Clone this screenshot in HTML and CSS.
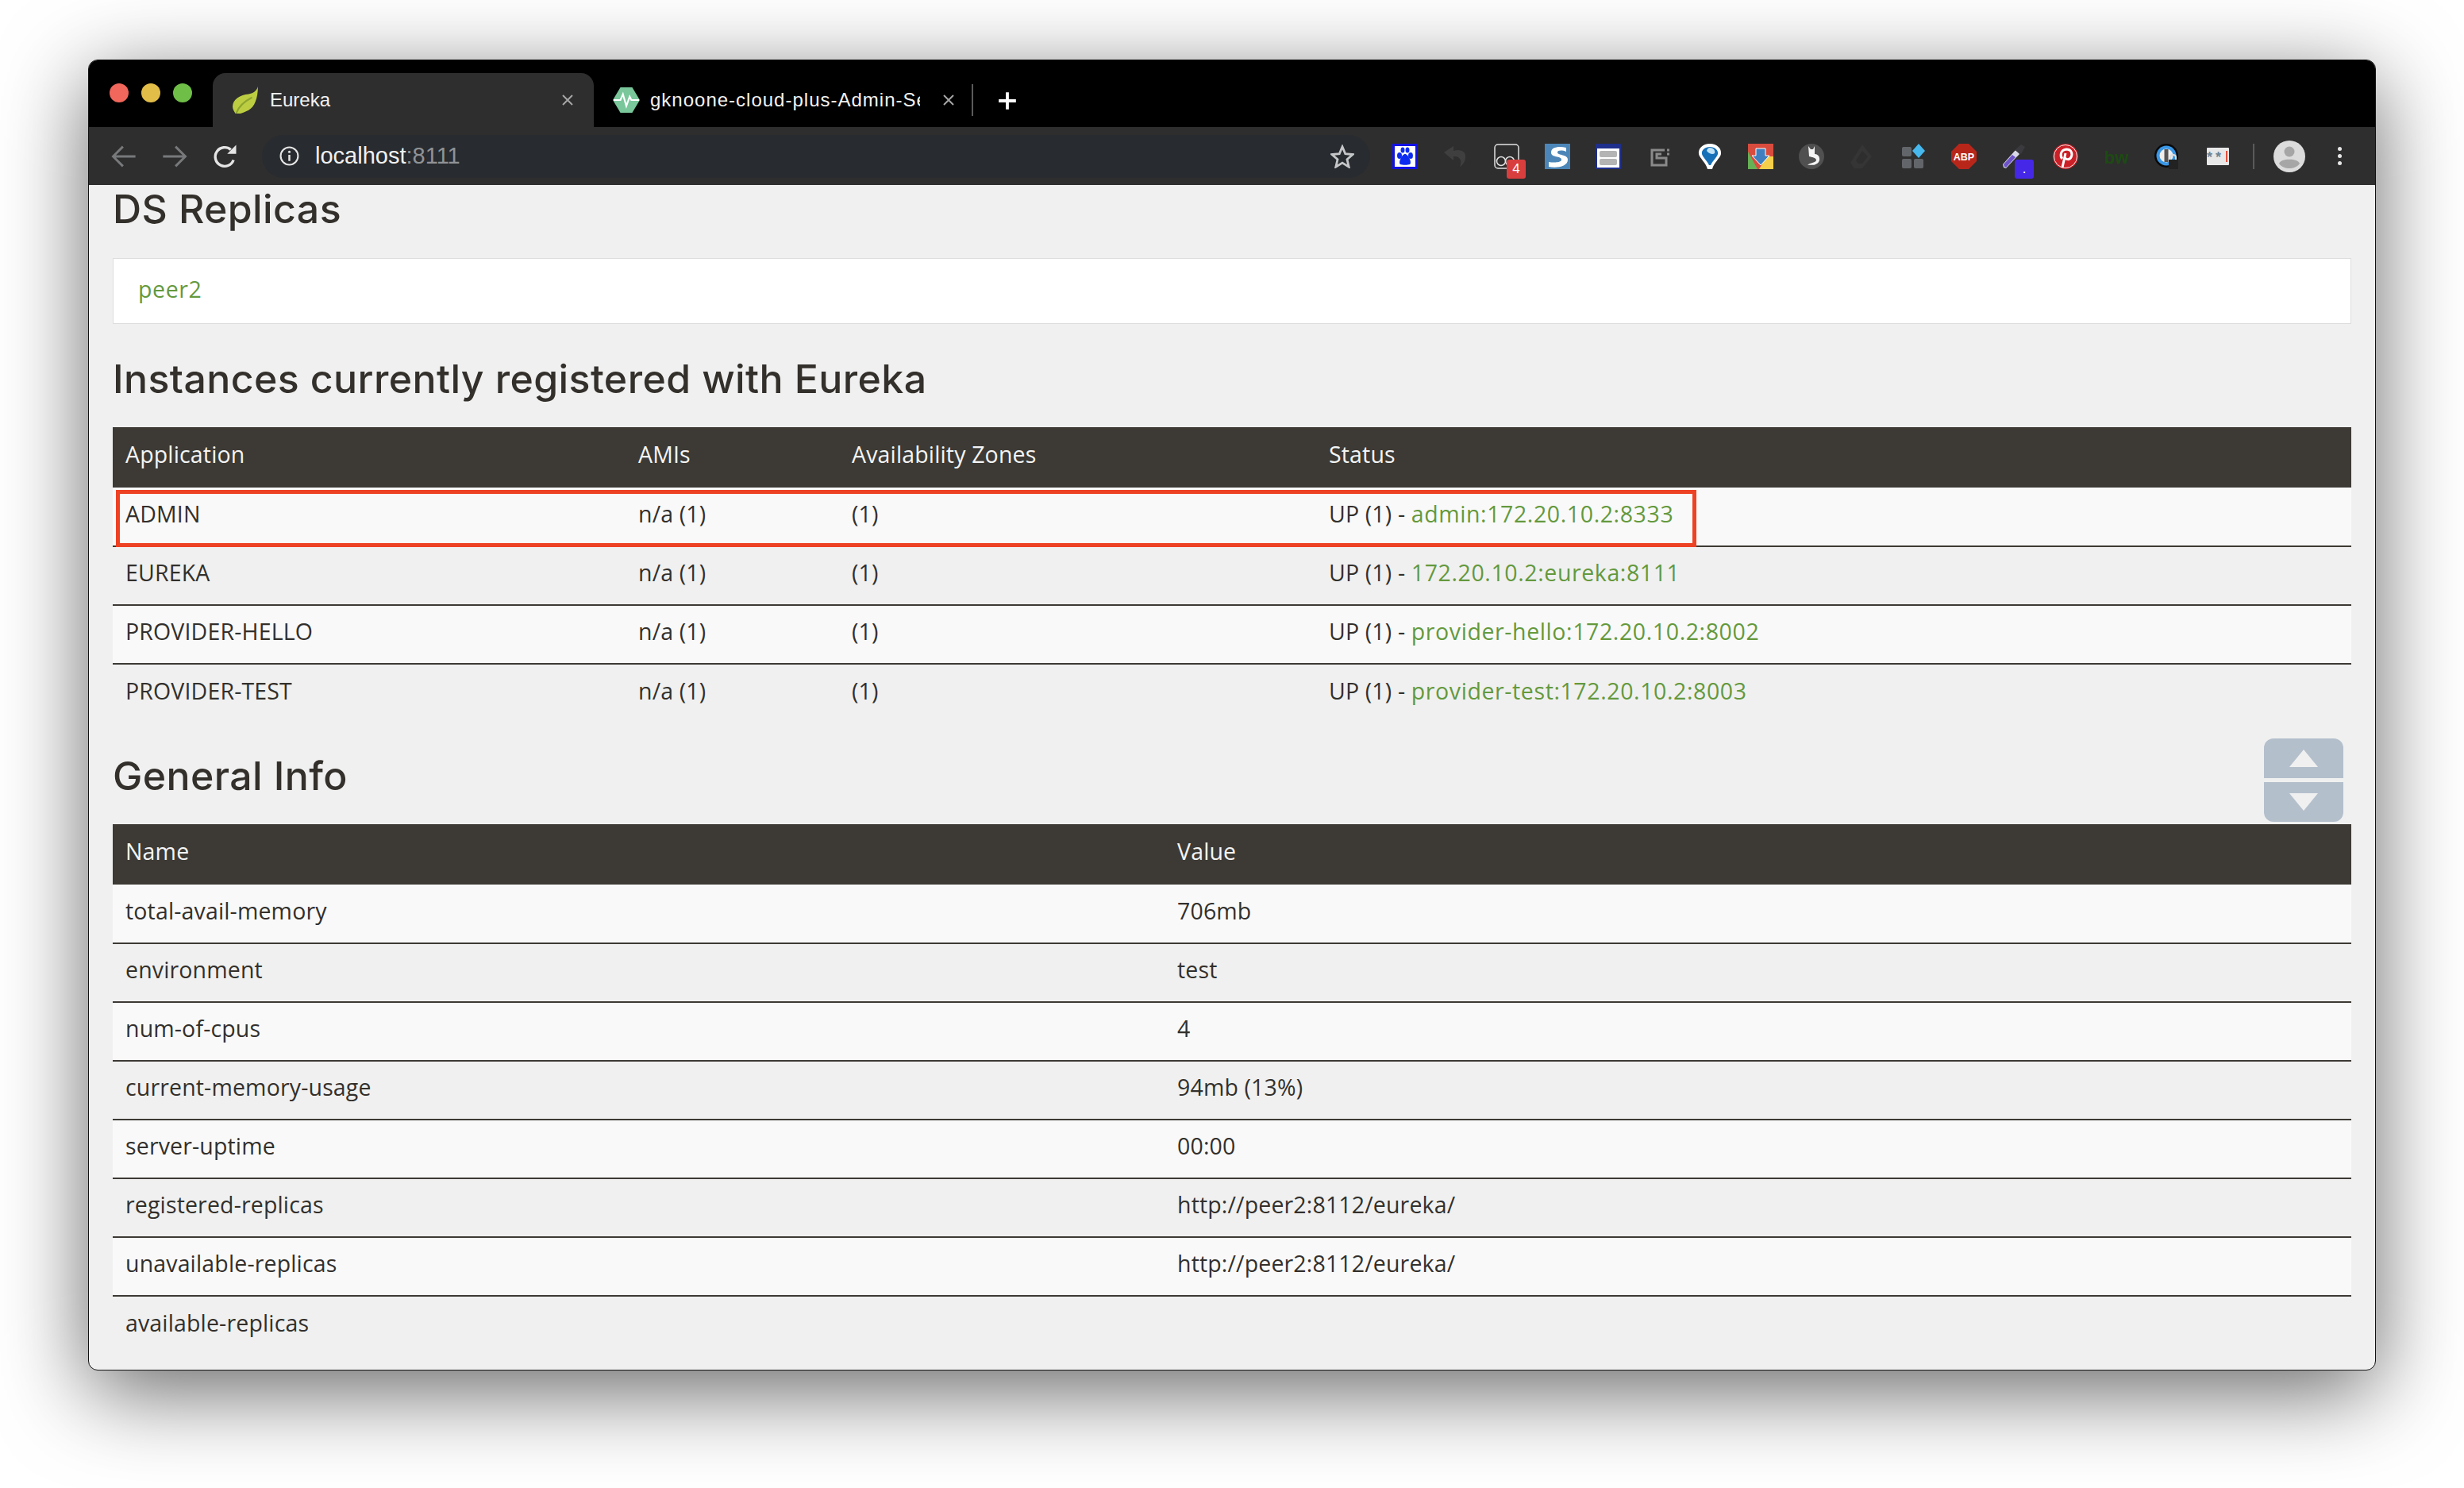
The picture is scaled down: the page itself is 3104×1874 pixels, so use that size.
FILE: index.html
```html
<!DOCTYPE html>
<html lang="en">

<head>
    <meta charset="utf-8">
    <title>Eureka</title>
    <link rel="stylesheet" href="styles.css">
</head>

<body>
    <div class="vindue">
        <div class="faner">
            <div class="lys">
                <span class="lys_rod"></span>
                <span class="lys_gul"></span>
                <span class="lys_gron"></span>
            </div>
            <div class="fane aktiv">
                <svg class="favicon" viewBox="0 0 32 32">
                    <path d="M31 0C29 6 25 8 20 9C10 10 1 15 1 24C1 27 3 30 5 33C8 33 14 31 20 28C27 24 31 14 31 0Z" fill="#bccd42" />
                    <path d="M5 32C8 24 14 18 24 13" stroke="#8da52f" stroke-width="2" fill="none" />
                </svg>
                <span class="fane_navn">Eureka</span>
                <svg class="luk" viewBox="0 0 16 16">
                    <path d="M2 2L14 14M14 2L2 14" stroke="#a5a5a5" stroke-width="2" />
                </svg>
            </div>
            <div class="fane">
                <svg class="favicon" viewBox="0 0 32 32">
                    <path d="M9 1H23L32 16L23 31H9L0 16Z" fill="#79c79b" />
                    <path d="M1 16H9L12 9L16 23L20 12L22 16H31" stroke="#fff" stroke-width="2" fill="none" />
                </svg>
                <span class="fane_navn">gknoone-cloud-plus-Admin-Se</span>
                <svg class="luk" viewBox="0 0 16 16">
                    <path d="M2 2L14 14M14 2L2 14" stroke="#a5a5a5" stroke-width="2" />
                </svg>
            </div>
            <span class="fane_streg"></span>
            <svg class="ny_fane" viewBox="0 0 24 24">
                <path d="M12 2V22M2 12H22" stroke="#fff" stroke-width="3.5" />
            </svg>
        </div>

        <div class="vaerktoj">
            <svg class="nav_ikon" viewBox="0 0 32 32">
                <path d="M29 16H4M15 5L4 16L15 27" stroke="#77797b" stroke-width="2.6" fill="none" />
            </svg>
            <svg class="nav_ikon" viewBox="0 0 32 32">
                <path d="M3 16H28M17 5L28 16L17 27" stroke="#77797b" stroke-width="2.6" fill="none" />
            </svg>
            <svg class="nav_ikon" viewBox="0 0 32 32">
                <path d="M25 20A10.500 10.500 0 1 1 22 8.500" stroke="#e4e4e4" stroke-width="3" fill="none" />
                <path d="M18 13H28V3Z" fill="#e4e4e4" />
            </svg>
            <div class="adresse">
                <svg class="info" viewBox="0 0 24 24">
                    <circle cx="12" cy="12" r="10.500" stroke="#e4e4e4" stroke-width="2" fill="none" />
                    <path d="M12 10.500V18" stroke="#e4e4e4" stroke-width="2.400" />
                    <circle cx="12" cy="7" r="1.500" fill="#e4e4e4" />
                </svg>
                <span class="url">localhost<span class="port">:8111</span></span>
                <svg class="stjerne" viewBox="0 0 32 32">
                    <path d="M16 3L20 12.500L30 13.400L22.400 20L24.700 30L16 24.700L7.300 30L9.600 20L2 13.400L12 12.500Z" stroke="#c4c6c8" stroke-width="3" fill="none" />
                </svg>
            </div>
            <div class="udvidelser">
                <span class="udv">
                    <svg viewBox="0 0 32 32">
                        <rect width="32" height="32" fill="#fff" />
                        <rect x="1.500" y="1.500" width="29" height="29" fill="none" stroke="#1212e6" stroke-width="3" />
                        <ellipse cx="9" cy="15" rx="3" ry="4" fill="#0d2bf0" />
                        <ellipse cx="23" cy="15" rx="3" ry="4" fill="#0d2bf0" />
                        <ellipse cx="13" cy="8" rx="2.500" ry="3.500" fill="#0d2bf0" />
                        <ellipse cx="19" cy="8" rx="2.500" ry="3.500" fill="#0d2bf0" />
                        <path d="M16 13C20 13 25 24 22 26C19 27 13 27 10 26C7 24 12 13 16 13Z" fill="#0d2bf0" />
                    </svg>
                </span>
                <span class="udv">
                    <svg viewBox="0 0 32 32">
                        <path d="M13 3V9C22 6 29 10 28 17C28 23 24 27 21 29C24 22 22 15 13 16V21L1 11Z" fill="#3f3f3f" />
                    </svg>
                </span>
                <span class="udv">
                    <svg viewBox="0 0 32 32">
                        <rect x="1" y="1" width="30" height="30" rx="4" fill="none" stroke="#e2e2e2" stroke-width="1.500" />
                        <circle cx="9" cy="22" r="5.500" fill="none" stroke="#e2e2e2" stroke-width="1.500" />
                        <circle cx="20" cy="22" r="5.500" fill="none" stroke="#e2e2e2" stroke-width="1.500" />
                    </svg>
                    <span class="maerke rod">4</span>
                </span>
                <span class="udv">
                    <svg viewBox="0 0 32 32">
                        <rect width="32" height="32" fill="#4c86b8" />
                        <path d="M27 5C18 3 8 4 8 11C8 18 21 15 21 20C21 24 11 24 5 23V29C15 31 29 29 29 20C29 13 16 15 16 11C16 8 22 8 27 10Z" fill="#fff" />
                    </svg>
                </span>
                <span class="udv">
                    <svg viewBox="0 0 32 32">
                        <rect width="32" height="32" rx="1" fill="#1f2f8c" />
                        <rect x="2" y="6" width="28" height="24" fill="#fff" />
                        <rect x="5" y="9" width="22" height="8" rx="2" fill="#b4b4b4" />
                        <rect x="5" y="19" width="22" height="8" rx="2" fill="#b4b4b4" />
                    </svg>
                </span>
                <span class="udv">
                    <svg viewBox="0 0 32 32">
                        <path d="M23 8H7V27H25V18H13V13H19M26 8H29M26 13H29" fill="none" stroke="#8a8a8a" stroke-width="3" />
                    </svg>
                </span>
                <span class="udv">
                    <svg viewBox="0 0 32 32">
                        <path d="M16 0C25 0 31 6 30 13C29 18 21 24 19 32H13C11 24 3 18 2 13C1 6 7 0 16 0Z" fill="#fff" />
                        <path d="M16 4C22 4 27 8 26 13C25 17 20 21 17 27H15C12 21 7 17 6 13C5 8 10 4 16 4Z" fill="#1670b8" />
                        <path d="M16 5C20 5 23 8 22 12C20 14 15 13 12 9C13 6 14 5 16 5Z" fill="#bfe2f5" />
                    </svg>
                </span>
                <span class="udv">
                    <svg viewBox="0 0 32 32">
                        <path d="M0 0H32V16L19 32H0Z" fill="#d94c3d" />
                        <path d="M0 10L12 32H0Z" fill="#66b155" />
                        <path d="M32 16V32H14L24 16Z" fill="#f5cf4a" />
                        <path d="M10 6H22V15H27L16 27L5 15H10Z" fill="#3f7fbf" stroke="#fff" stroke-width="1" />
                    </svg>
                </span>
                <span class="udv">
                    <svg viewBox="0 0 32 32">
                        <ellipse cx="16" cy="16" rx="16" ry="16" fill="#505050" />
                        <path d="M12 3L15 7H18L20 3V13C27 13 28 22 23 25C19 28 14 26 11 27C15 23 20 25 22 21C22 17 16 17 13 16Z" fill="#f4f4f4" />
                    </svg>
                </span>
                <span class="udv">
                    <svg viewBox="0 0 32 32">
                        <path d="M16 1L28 16L16 31H6L1 24ZM16 9L8 21L11 25H16L23 16Z" fill="#353535" />
                    </svg>
                </span>
                <span class="udv">
                    <svg viewBox="0 0 32 32">
                        <rect x="2" y="4" width="12" height="12" rx="2" fill="#62666a" />
                        <rect x="2" y="19" width="12" height="12" rx="2" fill="#62666a" />
                        <rect x="17" y="19" width="12" height="12" rx="2" fill="#62666a" />
                        <path d="M23 0L31 9L23 18L15 9Z" fill="#46b8ee" />
                    </svg>
                </span>
                <span class="udv">
                    <svg viewBox="0 0 32 32">
                        <path d="M10 0H22L32 10V22L22 32H10L0 22V10Z" fill="#b8261a" />
                        <text x="16" y="21" class="abp">ABP</text>
                    </svg>
                </span>
                <span class="udv">
                    <svg viewBox="0 0 32 32">
                        <path d="M2 30L1 26L17 8L22 13L5 31Z" fill="#d8d8e8" />
                        <path d="M3 29L2 26L13 14L17 17L5 30Z" fill="#6d52c8" />
                        <path d="M16 8L24 1L29 4L24 13Z" fill="#3b3b3f" />
                    </svg>
                    <span class="maerke blaa">.</span>
                </span>
                <span class="udv">
                    <svg viewBox="0 0 32 32">
                        <circle cx="16" cy="16" r="16" fill="#cb2027" />
                        <circle cx="16" cy="16" r="14.500" fill="none" stroke="#e8e8e8" stroke-width="1" />
                        <path d="M12 19C9 16 9 8 17 7C24 7 25 13 23 17C21 21 16 20 15 17M16 12L12 30" fill="none" stroke="#fff" stroke-width="3" />
                    </svg>
                </span>
                <span class="udv">
                    <svg viewBox="0 0 32 32">
                        <text x="16" y="25" class="bw">bw</text>
                    </svg>
                </span>
                <span class="udv">
                    <svg viewBox="0 0 32 32">
                        <circle cx="15" cy="15" r="15" fill="#0a0a0a" />
                        <circle cx="15" cy="15" r="12.500" fill="#3a97e6" />
                        <circle cx="15" cy="15" r="8.500" fill="#eee" />
                        <rect x="12.500" y="7" width="5" height="16" fill="#555" />
                        <path d="M20 20V17C20 13 27 13 27 17V20" fill="none" stroke="#ddd" stroke-width="2" />
                        <rect x="18" y="20" width="12" height="12" fill="#222" />
                    </svg>
                </span>
                <span class="udv">
                    <svg viewBox="0 0 32 32">
                        <rect x="2" y="5" width="28" height="22" rx="1" fill="#e8e8e8" />
                        <text x="2" y="23" class="pw">*</text>
                        <text x="13" y="23" class="pw">*</text>
                        <rect x="26" y="9" width="2" height="14" fill="#e2503c" />
                    </svg>
                </span>
            </div>
            <span class="vaerktoj_streg"></span>
            <svg class="avatar" viewBox="0 0 40 40">
                <circle cx="20" cy="20" r="20" fill="#dcdcdc" />
                <circle cx="20" cy="14" r="6.500" fill="#a6a6a6" />
                <path d="M7 29C9 22 31 22 33 29C30 33 25 35 20 35C15 35 10 33 7 29Z" fill="#a6a6a6" />
            </svg>
            <span class="menu_prikker">
                <span></span>
                <span></span>
                <span></span>
            </span>
        </div>

        <main class="indhold">
            <h2>DS Replicas</h2>
            <div class="replikaer"><a href="#">peer2</a></div>

            <h2 class="overskrift">Instances currently registered with Eureka</h2>
            <div class="tabel_boks">
                <table class="tabel instanser">
                    <colgroup>
                        <col class="kol_app">
                        <col class="kol_ami">
                        <col class="kol_zone">
                        <col>
                    </colgroup>
                    <thead>
                        <tr>
                            <th>Application</th>
                            <th>AMIs</th>
                            <th>Availability Zones</th>
                            <th>Status</th>
                        </tr>
                    </thead>
                    <tbody>
                        <tr>
                            <td>ADMIN</td>
                            <td>n/a (1)</td>
                            <td>(1)</td>
                            <td>UP (1) - <a href="#">admin:172.20.10.2:8333</a></td>
                        </tr>
                        <tr>
                            <td>EUREKA</td>
                            <td>n/a (1)</td>
                            <td>(1)</td>
                            <td>UP (1) - <a href="#">172.20.10.2:eureka:8111</a></td>
                        </tr>
                        <tr>
                            <td>PROVIDER-HELLO</td>
                            <td>n/a (1)</td>
                            <td>(1)</td>
                            <td>UP (1) - <a href="#">provider-hello:172.20.10.2:8002</a></td>
                        </tr>
                        <tr>
                            <td>PROVIDER-TEST</td>
                            <td>n/a (1)</td>
                            <td>(1)</td>
                            <td>UP (1) - <a href="#">provider-test:172.20.10.2:8003</a></td>
                        </tr>
                    </tbody>
                </table>
                <div class="roed_ramme"></div>
            </div>

            <h2 class="overskrift">General Info</h2>
            <div class="tabel_boks">
                <div class="rul">
                    <div class="rul_op"><span></span></div>
                    <div class="rul_ned"><span></span></div>
                </div>
                <table class="tabel info_tabel">
                    <colgroup>
                        <col class="kol_navn">
                        <col>
                    </colgroup>
                    <thead>
                        <tr>
                            <th>Name</th>
                            <th>Value</th>
                        </tr>
                    </thead>
                    <tbody>
                        <tr>
                            <td>total-avail-memory</td>
                            <td>706mb</td>
                        </tr>
                        <tr>
                            <td>environment</td>
                            <td>test</td>
                        </tr>
                        <tr>
                            <td>num-of-cpus</td>
                            <td>4</td>
                        </tr>
                        <tr>
                            <td>current-memory-usage</td>
                            <td>94mb (13%)</td>
                        </tr>
                        <tr>
                            <td>server-uptime</td>
                            <td>00:00</td>
                        </tr>
                        <tr>
                            <td>registered-replicas</td>
                            <td>http://peer2:8112/eureka/</td>
                        </tr>
                        <tr>
                            <td>unavailable-replicas</td>
                            <td>http://peer2:8112/eureka/</td>
                        </tr>
                        <tr>
                            <td>available-replicas</td>
                            <td></td>
                        </tr>
                    </tbody>
                </table>
            </div>
        </main>
    </div>
</body>

</html>
```

FILE: styles.css
```css
html,
body {
    margin: 0;
    height: 100%;
    background-color: #ffffff;
    overflow: hidden;
}

body {
    padding: 75px 111px 0 111px;
    box-sizing: border-box;
    font-family: "Open Sans", sans-serif;
}

.vindue {
    height: 1651px;
    border: 1px solid #111111;
    border-radius: 12px;
    background-color: #f0f0f0;
    box-shadow: 0 26px 110px rgba(0, 0, 0, 0.6);
    overflow: hidden;
    box-sizing: border-box;
}

/* fanebjaelke */
.faner {
    height: 84px;
    background-color: #000000;
    display: flex;
    align-items: flex-end;
    font-family: "Liberation Sans", sans-serif;
}

.lys {
    width: 156px;
    height: 84px;
    display: flex;
    gap: 16px;
    align-items: center;
    padding: 0 0 2px 26px;
    box-sizing: border-box;
}

.lys span {
    width: 24px;
    height: 24px;
    border-radius: 50%;
}

.lys_rod {
    background-color: #f1675c;
}

.lys_gul {
    background-color: #e2bd48;
}

.lys_gron {
    background-color: #6fbe48;
}

.fane {
    width: 480px;
    height: 68px;
    border-radius: 16px 16px 0 0;
    display: flex;
    align-items: center;
    padding: 0 25px 0 24px;
    box-sizing: border-box;
    flex-shrink: 0;
}

.fane.aktiv {
    background-color: #2e2e2e;
}

.favicon {
    width: 34px;
    height: 34px;
    flex-shrink: 0;
}

.fane_navn {
    margin: 0 28px 0 14px;
    flex: 1;
    font-size: 24px;
    color: #f2f2f2;
    white-space: nowrap;
    overflow: hidden;
}

.fane + .fane .fane_navn {
    margin-left: 13px;
    letter-spacing: 1px;
}

.luk {
    width: 16px;
    height: 16px;
    flex-shrink: 0;
}

.fane_streg {
    width: 2px;
    height: 40px;
    margin: 0 30px 14px -4px;
    background-color: #5a5a5a;
}

.ny_fane {
    width: 26px;
    height: 26px;
    margin-bottom: 20px;
}

/* vaerktoejslinje */
.vaerktoj {
    height: 73px;
    background-color: #2e2e2e;
    display: flex;
    align-items: center;
    padding-left: 26px;
    font-family: "Liberation Sans", sans-serif;
}

.nav_ikon {
    width: 36px;
    height: 36px;
    margin-right: 28px;
    flex-shrink: 0;
}

.adresse {
    width: 1396px;
    height: 54px;
    border-radius: 27px;
    background-color: #282b2f;
    display: flex;
    align-items: center;
    padding: 0 20px 0 22px;
    box-sizing: border-box;
    flex-shrink: 0;
}

.info {
    width: 25px;
    height: 25px;
}

.url {
    margin-left: 20px;
    flex: 1;
    font-size: 29px;
    color: #f0f0f0;
}

.port {
    color: #909295;
}

.stjerne {
    width: 30px;
    height: 30px;
}

.udvidelser {
    display: flex;
    margin-left: 12px;
}

.udv {
    position: relative;
    width: 64px;
    height: 32px;
    display: flex;
    justify-content: center;
}

.udv svg {
    width: 32px;
    height: 32px;
}

.maerke {
    position: absolute;
    left: 32px;
    top: 20px;
    width: 24px;
    height: 24px;
    border-radius: 3px;
    color: #ffffff;
    font-size: 17px;
    line-height: 24px;
    text-align: center;
}

.rod {
    background-color: #d93e3e;
}

.blaa {
    background-color: #4527e8;
}

.abp {
    font-size: 12.500px;
    font-weight: bold;
    fill: #ffffff;
    text-anchor: middle;
}

.bw {
    font-size: 22px;
    font-weight: bold;
    fill: #1d4a12;
    text-anchor: middle;
}

.pw {
    font-size: 18px;
    font-weight: bold;
    fill: #6d8496;
}

.vaerktoj_streg {
    width: 2px;
    height: 32px;
    margin-left: 12px;
    background-color: #5a5a5a;
}

.avatar {
    width: 40px;
    height: 40px;
    margin-left: 24px;
}

.menu_prikker {
    margin-left: 41px;
    display: flex;
    flex-direction: column;
    gap: 4px;
}

.menu_prikker span {
    width: 5px;
    height: 5px;
    border-radius: 50%;
    background-color: #e6e6e6;
}

/* side indhold */
.indhold {
    padding: 0 30px;
    color: #33302c;
}

h2 {
    margin: 0 0 32px 0;
    height: 60px;
    font-family: "Inter", sans-serif;
    font-size: 50px;
    font-weight: 500;
    letter-spacing: 0.4px;
    line-height: 60px;
    color: #33302c;
}

.overskrift {
    margin: 39px 0 31px 0;
}

.tabel_boks + .overskrift {
    margin-top: 37px;
}

.replikaer {
    height: 83px;
    padding: 0 31px;
    box-sizing: border-box;
    background-color: #ffffff;
    border: 1px solid #dddddd;
    font-size: 28.500px;
    letter-spacing: 0.15px;
    line-height: 76px;
}

a {
    color: #64993d;
    text-decoration: none;
    letter-spacing: 0.6px;
}

.tabel_boks {
    position: relative;
}

.tabel {
    width: 100%;
    border-collapse: collapse;
    table-layout: fixed;
    font-size: 28.500px;
    letter-spacing: 0.15px;
}

th {
    height: 76px;
    padding: 0 15px 8px 16px;
    box-sizing: border-box;
    background-color: #3d3a35;
    color: #f4f4f4;
    font-weight: 500;
    text-align: left;
}

td {
    height: 74px;
    padding: 0 15px 8px 16px;
    box-sizing: border-box;
    border-bottom: 2px solid #3d3a35;
    white-space: nowrap;
}

tbody tr:nth-child(odd) {
    background-color: #f9f9f9;
}

tbody tr:last-child td {
    border-bottom: 0;
}

.kol_app {
    width: 646px;
}

.kol_ami {
    width: 269px;
}

.kol_zone {
    width: 601px;
}

.kol_navn {
    width: 1325px;
}

.roed_ramme {
    position: absolute;
    left: 4px;
    top: 79px;
    width: 1991px;
    height: 72px;
    border: 5px solid #ee4224;
    box-sizing: border-box;
}

.rul {
    position: absolute;
    right: 10px;
    top: -108px;
    width: 100px;
    display: flex;
    flex-direction: column;
    gap: 5px;
}

.rul div {
    height: 50px;
    background-color: #b4bfcc;
    display: flex;
    align-items: center;
    justify-content: center;
}

.rul_op {
    border-radius: 12px 12px 0 0;
}

.rul_ned {
    border-radius: 0 0 12px 12px;
}

.rul_op span {
    border-left: 18px solid transparent;
    border-right: 18px solid transparent;
    border-bottom: 22px solid #f0f0f0;
}

.rul_ned span {
    border-left: 18px solid transparent;
    border-right: 18px solid transparent;
    border-top: 22px solid #f0f0f0;
}
```
